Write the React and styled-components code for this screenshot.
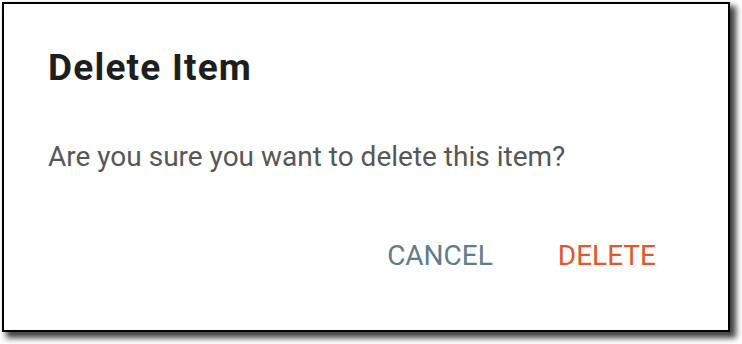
import React from 'react';
import styled, { createGlobalStyle } from 'styled-components';

const GlobalStyle = createGlobalStyle`
  html, body {
    margin: 0;
    padding: 0;
    background: #ffffff;
  }
  body {
    font-family: Roboto, "Liberation Sans", Arial, sans-serif;
  }
`;

const Page = styled.div`
  padding: 2px 12px 12px 2px;
  width: 742px;
  height: 344px;
  box-sizing: border-box;
`;

const Dialog = styled.div`
  width: 728px;
  height: 330px;
  box-sizing: border-box;
  border: 2px solid #000;
  background: #fff;
  box-shadow: 5px 5px 6px 1px rgba(0, 0, 0, 0.75);
  display: flex;
  flex-direction: column;
  padding: 44px 44px 0 44px;
`;

const Title = styled.h2`
  margin: 0;
  font-size: 37px;
  line-height: 40px;
  font-weight: 700;
  letter-spacing: 1.2px;
  color: #1e1e1e;
`;

const Message = styled.p`
  margin: 51px 0 0 0;
  font-size: 28px;
  line-height: 36px;
  color: #575757;
`;

const Actions = styled.div`
  display: flex;
  justify-content: flex-end;
  gap: 65px;
  margin-top: 63px;
  padding-right: 28px;
`;

const ActionButton = styled.button`
  border: none;
  background: transparent;
  padding: 0;
  font-family: inherit;
  font-size: 28px;
  line-height: 36px;
  text-transform: uppercase;
  color: ${(p) => (p.$danger ? '#e5562d' : '#607d8b')};
  cursor: pointer;
`;

export default function App() {
  return (
    <>
      <GlobalStyle />
      <Page>
        <Dialog>
          <Title>Delete Item</Title>
          <Message>Are you sure you want to delete this item?</Message>
          <Actions>
            <ActionButton>Cancel</ActionButton>
            <ActionButton $danger>Delete</ActionButton>
          </Actions>
        </Dialog>
      </Page>
    </>
  );
}
